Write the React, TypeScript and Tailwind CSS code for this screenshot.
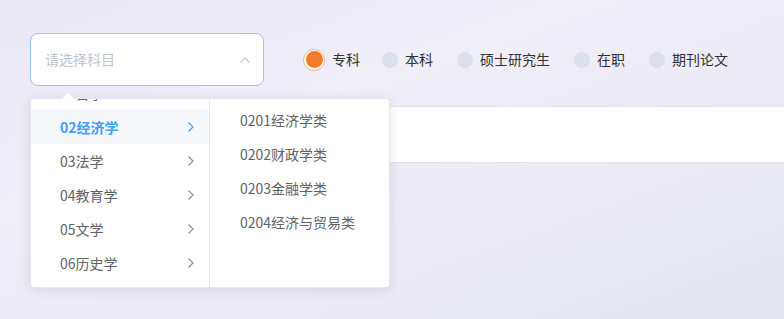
import React from "react";

const font = { fontFamily: '"Noto Sans CJK SC", "Noto Sans", sans-serif' };

function Chevron({ className }: { className?: string }) {
  return (
    <svg width="8" height="12" viewBox="0 0 8 12" className={className} fill="none">
      <path d="M1.5 1.5 L6 6 L1.5 10.5" stroke="currentColor" strokeWidth="1.2" />
    </svg>
  );
}

export default function App() {
  const left = ["01哲学", "02经济学", "03法学", "04教育学", "05文学", "06历史学"];
  const right = ["0201经济学类", "0202财政学类", "0203金融学类", "0204经济与贸易类"];
  const radios = [
    { label: "专科", checked: true },
    { label: "本科" },
    { label: "硕士研究生" },
    { label: "在职" },
    { label: "期刊论文" },
  ];
  return (
    <div
      className="relative w-[784px] h-[319px] overflow-hidden bg-[linear-gradient(160deg,#e9e8f3_0%,#f0eff8_35%,#ecebf5_60%,#e6e6f2_100%)]"
      style={font}
    >
      <div className="pt-[33px] pl-[30px]">
        <div className="flex items-center">
          <div className="w-[234px] h-[53px] rounded-[8px] border border-[#9ec2fb] bg-white flex items-center justify-between pl-[14px] pr-[12px]">
            <span className="text-[14px] text-[#c0c4cc]">请选择科目</span>
            <svg width="12" height="8" viewBox="0 0 12 8" fill="none" className="text-[#c0c4cc]">
              <path d="M1.5 6.5 L6 2 L10.5 6.5" stroke="currentColor" strokeWidth="1.2" />
            </svg>
          </div>
          <div className="flex items-center ml-[39px] text-[14px] text-[#303133]">
            {radios.map((r, i) =>
              r.checked ? (
                <div key={i} className="flex items-center mr-[22px]">
                  <span className="w-[22px] h-[22px] rounded-full border border-[#f5b48a] flex items-center justify-center bg-white">
                    <span className="w-[17px] h-[17px] rounded-full bg-[#f47b2c]" />
                  </span>
                  <span className="ml-[7px]">{r.label}</span>
                </div>
              ) : (
                <div key={i} className="flex items-center mr-[24px]">
                  <span className="w-[16px] h-[16px] rounded-full bg-[#dce0ea]" />
                  <span className="ml-[7px]">{r.label}</span>
                </div>
              )
            )}
          </div>
        </div>
        <div className="mt-[20px] h-[57px] bg-white border-y border-[#e3e2ee]" />
      </div>

      <div className="absolute left-[30px] top-[98px] w-[360px] h-[190px] bg-white rounded-[4px] border border-[#e4e7ed] shadow-[0_2px_12px_rgba(0,0,0,0.1)] flex text-[14px]">
        <div className="absolute -top-[6px] left-[31px] w-0 h-0 border-l-[6px] border-r-[6px] border-b-[6px] border-l-transparent border-r-transparent border-b-white" />
        <div className="w-[179px] h-full overflow-hidden border-r border-[#e4e7ed]">
          <div className="-mt-[23px]">
            {left.map((t, i) => (
              <div
                key={t}
                className={
                  i === 1
                    ? "h-[34px] flex items-center justify-between pl-[29px] pr-[14px] bg-[#f5f7fa] text-[#409eff] font-bold"
                    : "h-[34px] flex items-center justify-between pl-[29px] pr-[14px] text-[#606266]"
                }
              >
                <span>{t}</span>
                <Chevron className={i === 1 ? "text-[#409eff]" : "text-[#909399]"} />
              </div>
            ))}
          </div>
        </div>
        <div className="flex-1 pt-[4px]">
          {right.map((t) => (
            <div key={t} className="h-[34px] flex items-center pl-[30px] text-[#606266]">
              {t}
            </div>
          ))}
        </div>
      </div>
    </div>
  );
}
